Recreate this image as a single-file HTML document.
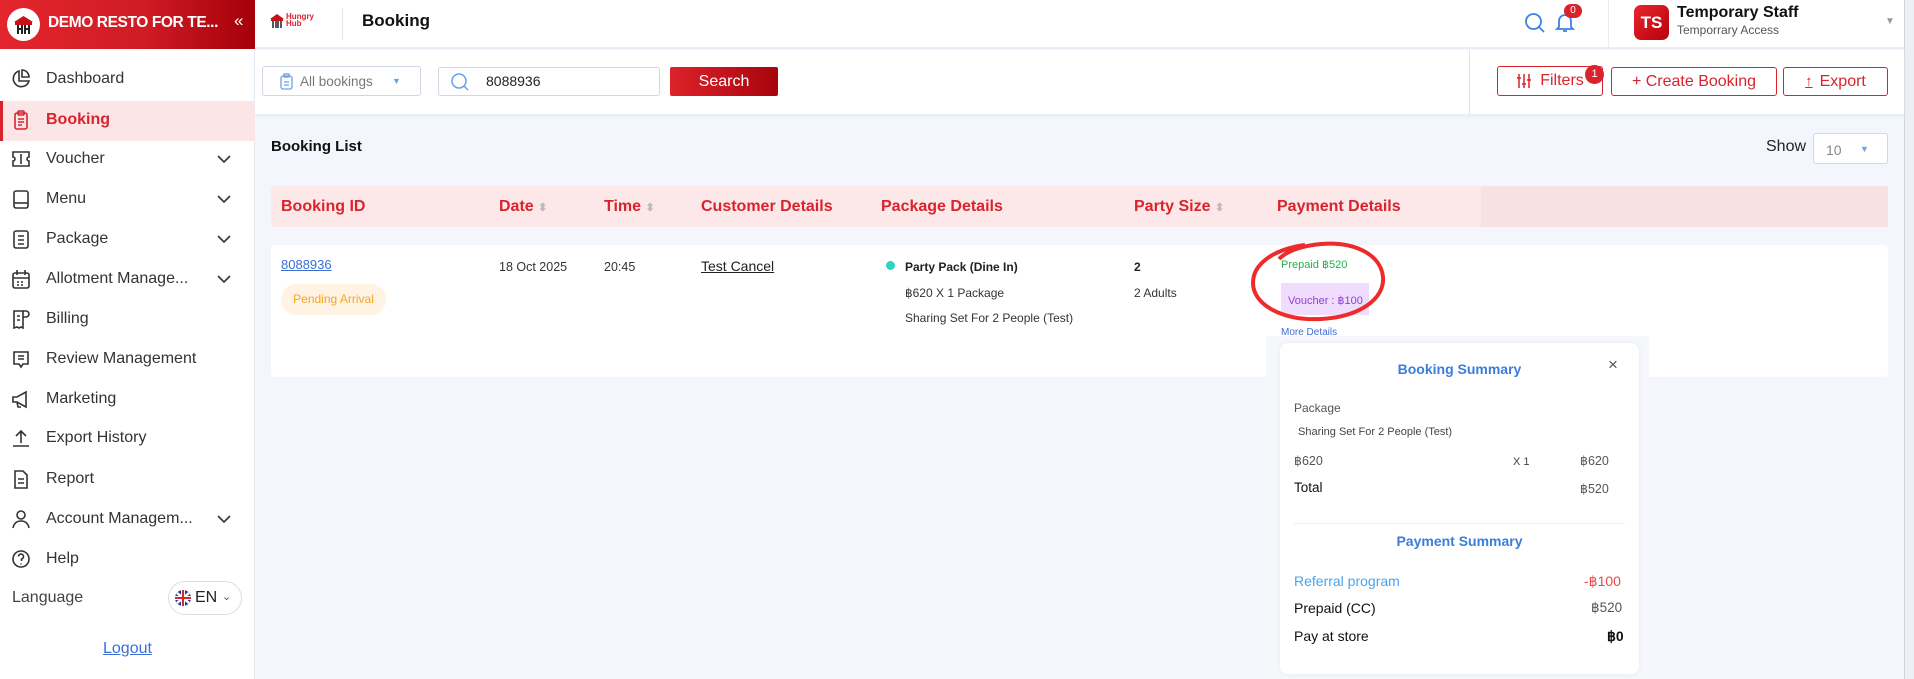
<!DOCTYPE html>
<html><head><meta charset="utf-8"><style>
*{box-sizing:border-box;margin:0;padding:0}
body{width:1914px;height:679px;overflow:hidden;font-family:"Liberation Sans",sans-serif;background:#f3f7fd;position:relative;color:#222}
.abs{position:absolute}
.side{left:0;top:0;width:255px;height:679px;background:#fff;border-right:1px solid #e6eaf0}
.brand{left:0;top:0;width:255px;height:49px;background:linear-gradient(90deg,#e3252d 0%,#d01c25 55%,#a5000a 100%)}
.nav{position:absolute;left:0;width:255px;height:40px;display:flex;align-items:center;font-size:16px;color:#333}
.nav svg{position:absolute;left:10px}
.nav span{position:absolute;left:46px}
.nav .chev{position:absolute;left:216px}
.top{left:255px;top:0;width:1649px;height:49px;background:#fff;border-bottom:2px solid #e8eef6}
.tool{left:255px;top:50px;width:1649px;height:64px;background:#fff;box-shadow:0 2px 4px #e2ebf7}
.btnO{position:absolute;border:1.5px solid #d9232d;border-radius:3px;color:#d9232d;font-size:16px;display:flex;align-items:center;justify-content:center;background:#fff}
.th{position:absolute;top:207px;transform:translateY(-50%);color:#d9232d;font-weight:bold;font-size:16px}
</style></head><body>
<div class="abs side"></div>
<div class="abs brand">
 <div class="abs" style="left:7px;top:8px;width:33px;height:33px;border-radius:50%;background:#fff"></div>
 <svg class="abs" style="left:12px;top:14px" width="23" height="22" viewBox="0 0 23 22"><path d="M2 8 L11.5 2 L21 8 Z" fill="#c8121b"/><rect x="3" y="8" width="17" height="3" fill="#c8121b"/><path d="M6 11v9M10 11v9M13 11v9M17 11v9M6 15h4M13 15h4" stroke="#222" stroke-width="2"/></svg>
 <div class="abs" style="left:48px;top:14px;color:#fff;font-weight:bold;font-size:15.5px;letter-spacing:-.4px;white-space:nowrap">DEMO RESTO FOR TE...</div>
 <div class="abs" style="left:234px;top:11px;color:#fff;font-size:17px">«</div>
</div>
<div class="abs" style="left:0;top:101px;width:255px;height:40px;background:#fbe5e7;border-left:3px solid #d9232d"></div>

<div class="nav" style="top:59px"><svg width="22" height="22" viewBox="0 0 22 22" fill="none" stroke="#333" stroke-width="1.6"><path d="M9 3a8 8 0 1 0 10 10H9z"/><path d="M12 2v7h7a7 7 0 0 0-7-7z"/></svg><span>Dashboard</span></div>
<div class="nav" style="top:100px;color:#d9232d;font-weight:bold"><svg width="22" height="22" viewBox="0 0 22 22" fill="none" stroke="#d9232d" stroke-width="1.6"><rect x="5" y="4" width="12" height="16" rx="2"/><rect x="8" y="2" width="6" height="4" rx="1"/><path d="M8 10h6M8 13h6M8 16h4"/></svg><span>Booking</span></div>
<div class="nav" style="top:139px"><svg width="22" height="22" viewBox="0 0 22 22" fill="none" stroke="#333" stroke-width="1.6"><path d="M3 4h16v5a2 2 0 0 0 0 4v5H3v-5a2 2 0 0 0 0-4z"/><path d="M11 6v10"/></svg><span>Voucher</span><svg class="chev" style="left:216px" width="16" height="16" viewBox="0 0 16 16" fill="none" stroke="#333" stroke-width="1.6"><path d="M2 5l6 6 6-6"/></svg></div>
<div class="nav" style="top:179px"><svg width="22" height="22" viewBox="0 0 22 22" fill="none" stroke="#333" stroke-width="1.6"><rect x="4" y="3" width="14" height="17" rx="2"/><path d="M4 15h14"/></svg><span>Menu</span><svg class="chev" style="left:216px" width="16" height="16" viewBox="0 0 16 16" fill="none" stroke="#333" stroke-width="1.6"><path d="M2 5l6 6 6-6"/></svg></div>
<div class="nav" style="top:219px"><svg width="22" height="22" viewBox="0 0 22 22" fill="none" stroke="#333" stroke-width="1.6"><rect x="4" y="3" width="14" height="17" rx="2"/><path d="M8 8h6M8 12h6M8 16h6"/></svg><span>Package</span><svg class="chev" style="left:216px" width="16" height="16" viewBox="0 0 16 16" fill="none" stroke="#333" stroke-width="1.6"><path d="M2 5l6 6 6-6"/></svg></div>
<div class="nav" style="top:259px"><svg width="22" height="22" viewBox="0 0 22 22" fill="none" stroke="#333" stroke-width="1.6"><rect x="3" y="5" width="16" height="15" rx="2"/><path d="M7 2v5M15 2v5M3 10h16M7 14h2M11 14h2M7 17h2M11 17h2"/></svg><span>Allotment Manage...</span><svg class="chev" style="left:216px" width="16" height="16" viewBox="0 0 16 16" fill="none" stroke="#333" stroke-width="1.6"><path d="M2 5l6 6 6-6"/></svg></div>
<div class="nav" style="top:299px"><svg width="22" height="22" viewBox="0 0 22 22" fill="none" stroke="#333" stroke-width="1.6"><path d="M4 3h9v17l-2-1-2 1-2-1-3 1z"/><path d="M13 3h3a3 3 0 0 1 0 6h-3M7 8h3M7 12h3"/></svg><span>Billing</span></div>
<div class="nav" style="top:339px"><svg width="22" height="22" viewBox="0 0 22 22" fill="none" stroke="#333" stroke-width="1.6"><path d="M4 4h14v12h-5l-2 3-2-3H4z"/><path d="M8 8h6M8 11h6"/></svg><span>Review Management</span></div>
<div class="nav" style="top:379px"><svg width="22" height="22" viewBox="0 0 22 22" fill="none" stroke="#333" stroke-width="1.6"><path d="M3 9v5h4l9 5V4L7 9z"/><path d="M7 14l1 5h3"/></svg><span>Marketing</span></div>
<div class="nav" style="top:418px"><svg width="22" height="22" viewBox="0 0 22 22" fill="none" stroke="#333" stroke-width="1.6"><path d="M11 16V4M6 9l5-5 5 5M3 19h16"/></svg><span>Export History</span></div>
<div class="nav" style="top:459px"><svg width="22" height="22" viewBox="0 0 22 22" fill="none" stroke="#333" stroke-width="1.6"><path d="M5 3h8l4 4v13H5z"/><path d="M8 11h6M8 15h6"/></svg><span>Report</span></div>
<div class="nav" style="top:499px"><svg width="22" height="22" viewBox="0 0 22 22" fill="none" stroke="#333" stroke-width="1.6"><circle cx="11" cy="7" r="4"/><path d="M3 20c1-5 4-7 8-7s7 2 8 7"/></svg><span>Account Managem...</span><svg class="chev" style="left:216px" width="16" height="16" viewBox="0 0 16 16" fill="none" stroke="#333" stroke-width="1.6"><path d="M2 5l6 6 6-6"/></svg></div>
<div class="nav" style="top:539px"><svg width="22" height="22" viewBox="0 0 22 22" fill="none" stroke="#333" stroke-width="1.6"><circle cx="11" cy="11" r="8"/><path d="M8.5 8.5a2.5 2.5 0 1 1 3 2.5v2M11 15.5v1"/></svg><span>Help</span></div>
<div class="abs" style="left:12px;top:589px;font-size:16px;color:#444">Language</div>
<div class="abs" style="left:168px;top:581px;width:74px;height:34px;border:1px solid #ddd;border-radius:17px;background:#fff"></div>
<svg class="abs" style="left:175px;top:590px" width="16" height="16" viewBox="0 0 16 16"><circle cx="8" cy="8" r="8" fill="#1e3a8a"/><path d="M2 3l12 10M14 3L2 13" stroke="#fff" stroke-width="2.5"/><path d="M8 0v16M0 8h16" stroke="#fff" stroke-width="4"/><path d="M8 0v16M0 8h16" stroke="#d9232d" stroke-width="2"/></svg>
<div class="abs" style="left:195px;top:589px;font-size:16px;color:#222">EN</div>
<div class="abs" style="left:222px;top:590px;font-size:11px;color:#555">⌄</div>
<div class="abs" style="left:103px;top:640px;font-size:16px;color:#3b6fd8;text-decoration:underline">Logout</div>

<div class="abs top">
 <svg class="abs" style="left:15px;top:14px" width="14" height="14" viewBox="0 0 14 14"><path d="M0 5L7 0l7 5z" fill="#c8121b"/><rect x="1" y="5" width="12" height="2" fill="#c8121b"/><path d="M3 7v7M6 7v7M8 7v7M11 7v7" stroke="#222" stroke-width="1.5"/></svg>
 <div class="abs" style="left:31px;top:13px;font-size:8px;line-height:7px;font-weight:bold;color:#d9232d">Hungry<br>Hub</div>
 <div class="abs" style="left:87px;top:8px;width:1px;height:32px;background:#e5e5e5"></div>
 <div class="abs" style="left:107px;top:11px;font-size:17px;font-weight:bold;color:#111">Booking</div>
 <svg class="abs" style="left:1268px;top:11px" width="24" height="24" viewBox="0 0 24 24" fill="none" stroke="#3b82e8" stroke-width="1.8"><circle cx="10.5" cy="10.5" r="7.5"/><path d="M16 16l5 5"/></svg>
 <svg class="abs" style="left:1299px;top:11px" width="22" height="22" viewBox="0 0 22 22" fill="none" stroke="#3b82e8" stroke-width="1.8"><path d="M5 16V10a6 6 0 0 1 12 0v6l2 2H3z"/><path d="M9 20h4"/></svg>
 <div class="abs" style="left:1309px;top:4px;width:18px;height:14px;border-radius:7px;background:#d9232d;color:#fff;font-size:10px;text-align:center;line-height:14px">0</div>
 <div class="abs" style="left:1353px;top:0;width:1px;height:49px;background:#e5ecf5"></div>
 <div class="abs" style="left:1379px;top:5px;width:35px;height:35px;border-radius:7px;background:linear-gradient(135deg,#e8262e,#b8000b);color:#fff;font-weight:bold;font-size:17px;text-align:center;line-height:35px">TS</div>
 <div class="abs" style="left:1422px;top:4px;font-size:16px;font-weight:bold;color:#111">Temporary Staff</div>
 <div class="abs" style="left:1422px;top:23px;font-size:12px;color:#555">Temporrary Access</div>
 <div class="abs" style="left:1630px;top:16px;font-size:10px;color:#999">▼</div>
</div>
<div class="abs" style="left:1904px;top:0;width:10px;height:679px;background:#eceff3;border-left:1px solid #d0d4da"></div>

<div class="abs tool">
 <div class="abs" style="left:7px;top:16px;width:159px;height:30px;border:1px solid #cfd7e3;border-radius:3px"></div>
 <svg class="abs" style="left:25px;top:23px" width="13" height="17" viewBox="0 0 13 17" fill="none" stroke="#6aa0e8" stroke-width="1.3"><rect x="1" y="3" width="11" height="13" rx="2"/><rect x="4" y="1" width="5" height="3"/><path d="M4 9h5M4 12h5"/></svg>
 <div class="abs" style="left:45px;top:24px;font-size:13.5px;color:#777">All bookings</div>
 <div class="abs" style="left:137px;top:26px;font-size:9px;color:#6aa0e8">▼</div>
 <div class="abs" style="left:183px;top:17px;width:222px;height:29px;border:1px solid #cfd7e3;border-radius:3px"></div>
 <svg class="abs" style="left:195px;top:22px" width="20" height="20" viewBox="0 0 20 20" fill="none" stroke="#6aa0e8" stroke-width="1.5"><circle cx="9" cy="9" r="7"/><path d="M14 14l4 4"/></svg>
 <div class="abs" style="left:231px;top:23px;font-size:14px;color:#222">8088936</div>
 <div class="abs" style="left:415px;top:17px;width:108px;height:29px;border-radius:2px;background:linear-gradient(90deg,#dd222b,#a8050d);color:#fff;font-size:16px;text-align:center;line-height:29px">Search</div>
 <div class="abs" style="left:1214px;top:0;width:1px;height:64px;background:#dbe6f3"></div>
 <div class="btnO" style="left:1242px;top:16px;width:106px;height:30px"><svg width="16" height="16" viewBox="0 0 16 16" fill="none" stroke="#d9232d" stroke-width="1.5" style="margin-right:8px"><path d="M3 1v14M8 1v14M13 1v14M1 5h4M6 11h4M11 7h4"/></svg>Filters</div>
 <div class="abs" style="left:1330px;top:15px;width:19px;height:19px;border-radius:50%;background:#d9232d;color:#fff;font-size:11px;text-align:center;line-height:19px">1</div>
 <div class="btnO" style="left:1356px;top:17px;width:166px;height:29px">+ Create Booking</div>
 <div class="btnO" style="left:1528px;top:17px;width:105px;height:29px"><span style="font-size:15px;margin-right:7px;text-decoration:underline">↑</span>Export</div>
</div>

<div class="abs" style="left:271px;top:138px;font-size:15px;font-weight:bold;color:#111">Booking List</div>
<div class="abs" style="left:1766px;top:138px;font-size:16px;color:#222">Show</div>
<div class="abs" style="left:1813px;top:133px;width:75px;height:31px;border:1px solid #cfd7e3;border-radius:3px;background:#fff"></div>
<div class="abs" style="left:1826px;top:142px;font-size:14px;color:#888">10</div>
<div class="abs" style="left:1860px;top:144px;font-size:9px;color:#6aa0e8">▼</div>

<div class="abs" style="left:271px;top:186px;width:1617px;height:41px;background:#fde8e9;border-radius:4px"></div>
<div class="abs" style="left:1481px;top:186px;width:407px;height:41px;background:#f7e1e3"></div>
<div class="th" style="left:281px">Booking ID</div>
<div class="th" style="left:499px">Date <span style="color:#bbb;font-size:11px">⬍</span></div>
<div class="th" style="left:604px">Time <span style="color:#bbb;font-size:11px">⬍</span></div>
<div class="th" style="left:701px">Customer Details</div>
<div class="th" style="left:881px">Package Details</div>
<div class="th" style="left:1134px">Party Size <span style="color:#bbb;font-size:11px">⬍</span></div>
<div class="th" style="left:1277px">Payment Details</div>

<div class="abs" style="left:271px;top:245px;width:1617px;height:132px;background:#fff;border-radius:4px"></div>
<div class="abs" style="left:281px;top:257px;font-size:13px;color:#3b6fd8;text-decoration:underline">8088936</div>
<div class="abs" style="left:281px;top:284px;width:105px;height:31px;border-radius:16px;background:#fff3e3;color:#f5a623;font-size:12px;text-align:center;line-height:31px">Pending Arrival</div>
<div class="abs" style="left:499px;top:260px;font-size:12.5px;color:#333">18 Oct 2025</div>
<div class="abs" style="left:604px;top:260px;font-size:12.5px;color:#333">20:45</div>
<div class="abs" style="left:701px;top:258px;font-size:14px;color:#222;text-decoration:underline">Test Cancel</div>
<div class="abs" style="left:886px;top:261px;width:9px;height:9px;border-radius:50%;background:#2dd4bf"></div>
<div class="abs" style="left:905px;top:260px;font-size:12px;font-weight:bold;color:#222">Party Pack (Dine In)</div>
<div class="abs" style="left:905px;top:286px;font-size:12px;color:#333">฿620 X 1 Package</div>
<div class="abs" style="left:905px;top:311px;font-size:12px;color:#333">Sharing Set For 2 People (Test)</div>
<div class="abs" style="left:1134px;top:260px;font-size:12px;font-weight:bold;color:#222">2</div>
<div class="abs" style="left:1134px;top:286px;font-size:12px;color:#333">2 Adults</div>
<div class="abs" style="left:1281px;top:258px;font-size:11px;color:#22b14c">Prepaid ฿520</div>
<div class="abs" style="left:1281px;top:283px;width:88px;height:32px;background:#f0dcfc;color:#8b3fd9;font-size:11px;padding-left:7px;line-height:36px">Voucher : ฿100</div>
<div class="abs" style="left:1281px;top:327px;font-size:10px;color:#3b6fd8;text-decoration:underline">More Details</div>
<svg class="abs" style="left:1245px;top:235px" width="160" height="100" viewBox="0 0 160 100" fill="none" stroke="#ee2a2a" stroke-width="4"><path d="M60 10C30 14 8 28 8 48c0 22 30 38 68 36 38-2 64-20 62-42C136 20 110 6 76 9 56 11 42 16 34 24"/></svg>

<div class="abs" style="left:1266px;top:336px;width:383px;height:343px;background:#f5f7fa"></div>
<div class="abs" style="left:1280px;top:343px;width:359px;height:331px;background:#fff;border-radius:8px;box-shadow:0 0 6px rgba(0,0,0,.06)"></div>
<div class="abs" style="left:1280px;top:361px;width:359px;text-align:center;font-size:14px;font-weight:bold;color:#3b7ddd">Booking Summary</div>
<div class="abs" style="left:1608px;top:355px;font-size:17px;color:#555">×</div>
<div class="abs" style="left:1294px;top:401px;font-size:12px;color:#555">Package</div>
<div class="abs" style="left:1298px;top:426px;font-size:11px;color:#444">Sharing Set For 2 People (Test)</div>
<div class="abs" style="left:1294px;top:453px;font-size:12.5px;color:#555">฿620</div>
<div class="abs" style="left:1513px;top:456px;font-size:11px;color:#444">X 1</div>
<div class="abs" style="left:1580px;top:453px;font-size:12.5px;color:#555">฿620</div>
<div class="abs" style="left:1294px;top:480px;font-size:13.5px;color:#111">Total</div>
<div class="abs" style="left:1580px;top:481px;font-size:12.5px;color:#555">฿520</div>
<div class="abs" style="left:1294px;top:523px;width:331px;height:1px;background:#eee"></div>
<div class="abs" style="left:1280px;top:533px;width:359px;text-align:center;font-size:14px;font-weight:bold;color:#3b7ddd">Payment Summary</div>
<div class="abs" style="left:1294px;top:573px;font-size:14px;color:#4aa3ee">Referral program</div>
<div class="abs" style="left:1584px;top:573px;font-size:14px;color:#f04545">-฿100</div>
<div class="abs" style="left:1294px;top:600px;font-size:14px;color:#111">Prepaid (CC)</div>
<div class="abs" style="left:1591px;top:600px;font-size:13.5px;color:#555">฿520</div>
<div class="abs" style="left:1294px;top:628px;font-size:14px;color:#111">Pay at store</div>
<div class="abs" style="left:1607px;top:628px;font-size:14px;font-weight:bold;color:#111">฿0</div>
</body></html>
